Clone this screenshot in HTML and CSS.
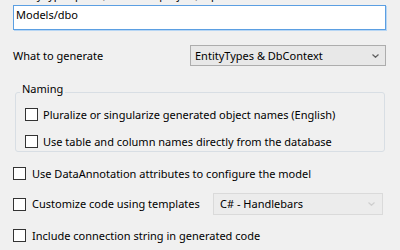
FILE: index.html
```html
<!DOCTYPE html>
<html>
<head>
<meta charset="utf-8">
<link rel="stylesheet" href="styles.css">
</head>
<body>
<div class="page">
  <div class="clipped">EntityTypes path (relative to project), optional</div>
  <div class="textbox">Models/dbo</div>
  <div class="row what">
    <span class="label">What to generate</span>
    <div class="combo">
      <span>EntityTypes &amp; DbContext</span>
      <svg class="chev" width="7" height="4" viewBox="0 0 7 4"><path d="M0.5 0.5 L3.5 3.3 L6.5 0.5" fill="none" stroke="#606060" stroke-width="1.2"/></svg>
    </div>
  </div>
  <fieldset class="group">
    <legend>Naming</legend>
    <div class="check in-group"><span class="box"></span><span>Pluralize or singularize generated object names (English)</span></div>
    <div class="check in-group second"><span class="box"></span><span>Use table and column names directly from the database</span></div>
  </fieldset>
  <div class="check outer first"><span class="box"></span><span>Use DataAnnotation attributes to configure the model</span></div>
  <div class="check outer templ">
    <span class="box"></span><span class="tlabel">Customize code using templates</span>
    <div class="combo disabled">
      <span>C# - Handlebars</span>
      <svg class="chev" width="7" height="4" viewBox="0 0 7 4"><path d="M0.5 0.5 L3.5 3.3 L6.5 0.5" fill="none" stroke="#cfcfcf" stroke-width="1.2"/></svg>
    </div>
  </div>
  <div class="check outer last"><span class="box"></span><span>Include connection string in generated code</span></div>
</div>
</body>
</html>
```

FILE: styles.css
```css
html, body {
  margin: 0;
  padding: 0;
  background: #f0f0f0;
  width: 400px;
  height: 250px;
  overflow: hidden;
}
.page {
  font-family: "Noto Sans", "Open Sans", sans-serif;
  font-size: 11px;
  line-height: 16px;
  color: #000;
  padding-left: 13px;
  display: flex;
  flex-direction: column;
}
.clipped {
  height: 16px;
  margin-top: -13px;
  white-space: nowrap;
}
.textbox {
  margin-top: 2px;
  width: 373px;
  height: 25px;
  box-sizing: border-box;
  background: #fff;
  border: 1px solid #5b9fe2;
  box-shadow: 1px 1px 0 #b7d6f4;
  padding: 1px 0 0 2px;
  line-height: 16px;
}
.row {
  display: flex;
  align-items: center;
}
.what {
  margin-top: 15px;
  height: 21px;
}
.what .label {
  width: 177px;
}
.combo {
  box-sizing: border-box;
  display: flex;
  align-items: center;
  justify-content: space-between;
  border: 1px solid #adadad;
  background: #e8e8e8;
  height: 21px;
  width: 196px;
  padding: 0 6px 0 4px;
}
.chev {
  display: block;
}
.group {
  margin: 15px 0 0 2px;
  width: 370px;
  box-sizing: border-box;
  border: 1px solid #d8dee4;
  border-radius: 3px;
  padding: 0 0 2px 4px;
}
.group legend {
  padding: 0 2px 6px 2px;
  line-height: 16px;
}
.check {
  display: flex;
  align-items: center;
  height: 15px;
  white-space: nowrap;
}
.box {
  width: 13px;
  height: 13px;
  box-sizing: border-box;
  border: 1px solid #333;
  background: #fff;
  flex: none;
}
.in-group {
  margin-left: 5px;
  margin-top: 4px;
  gap: 5px;
}
.in-group.second {
  margin-top: 12px;
}
.outer {
  gap: 6px;
}
.outer.first {
  margin-top: 14px;
}
.outer.templ {
  margin-top: 12px;
  height: 22px;
}
.tlabel {
  width: 175px;
}
.combo.disabled {
  width: 170px;
  height: 22px;
  border-color: #dadada;
  background: #ececec;
  padding: 0 7px 0 6px;
}
.outer.last {
  margin-top: 13px;
}
```
